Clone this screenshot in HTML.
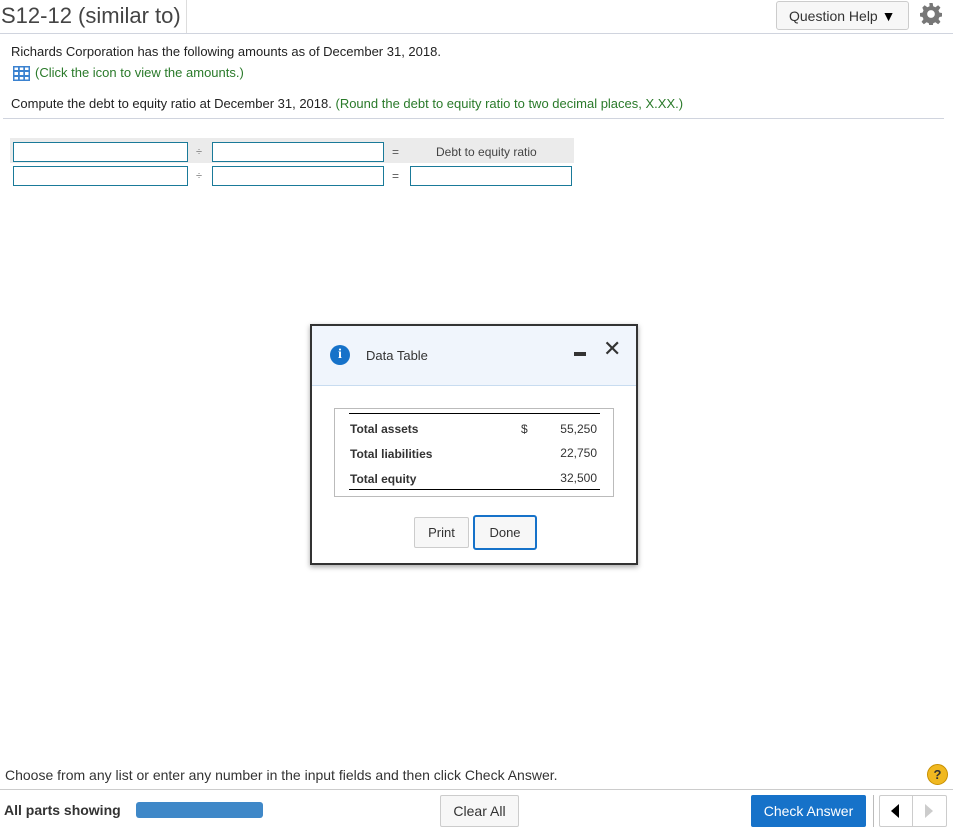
<!DOCTYPE html>
<html><head><meta charset="utf-8"><style>
*{box-sizing:border-box}
body{margin:0;width:953px;height:831px;position:relative;background:#fff;font-family:"Liberation Sans",Arial,sans-serif;color:#222;overflow:hidden}
.a{position:absolute}
input{position:absolute;height:20px;border:1px solid #1a7a99;background:#fff;margin:0;padding:0}
.g{color:#2a7a2a}
</style></head><body>
<div class="a" style="left:1px;top:3px;font-size:22px;color:#444">S12-12 (similar to)</div>
<div class="a" style="left:186px;top:0;width:1px;height:33px;background:#ddd"></div>
<div class="a" style="left:0;top:33px;width:953px;height:1px;background:#d0d4de"></div>
<div class="a" style="left:776px;top:1px;width:133px;height:29px;border:1px solid #ccc;border-radius:3px;background:#f7f7f7;font-size:14px;color:#333;padding:6px 0 0 12px">Question Help <span style="font-size:14px;color:#000">&#9660;</span></div>
<svg class="a" style="left:920px;top:3px" width="22" height="22" viewBox="0 0 20 20"><path fill="#777" fill-rule="evenodd" d="M8.5 0h3l.5 3 2 .9 2.5-1.8 2.1 2.1-1.8 2.5.9 2 3 .5v3l-3 .5-.9 2 1.8 2.5-2.1 2.1-2.5-1.8-2 .9-.5 3h-3l-.5-3-2-.9-2.5 1.8-2.1-2.1 1.8-2.5-.9-2-3-.5v-3l3-.5.9-2L2.1 4.2l2.1-2.1 2.5 1.8 2-.9zM10 6.5a3.5 3.5 0 1 0 0 7 3.5 3.5 0 0 0 0-7z"/></svg>
<div class="a" style="left:11px;top:44px;font-size:13px">Richards Corporation has the following amounts as of December 31, 2018.</div>
<svg class="a" style="left:13px;top:66px" width="17" height="15"><rect width="17" height="15" fill="#3b82d0"/><g fill="#fff"><rect x="1.5" y="1.5" width="3.5" height="2.5"/><rect x="6.8" y="1.5" width="3.5" height="2.5"/><rect x="12" y="1.5" width="3.5" height="2.5"/><rect x="1.5" y="6" width="3.5" height="3"/><rect x="6.8" y="6" width="3.5" height="3"/><rect x="12" y="6" width="3.5" height="3"/><rect x="1.5" y="11" width="3.5" height="2.5"/><rect x="6.8" y="11" width="3.5" height="2.5"/><rect x="12" y="11" width="3.5" height="2.5"/></g></svg>
<div class="a g" style="left:35px;top:65px;font-size:13px">(Click the icon to view the amounts.)</div>
<div class="a" style="left:11px;top:96px;font-size:13px">Compute the debt to equity ratio at December 31, 2018. <span class="g">(Round the debt to equity ratio to two decimal places, X.XX.)</span></div>
<div class="a" style="left:3px;top:118px;width:941px;height:1px;background:#d0d4de"></div>
<div class="a" style="left:10px;top:138px;width:564px;height:25px;background:#ebebeb"></div>
<input style="left:13px;top:142px;width:175px">
<div class="a" style="left:196px;top:146px;font-size:11px;color:#777">÷</div>
<input style="left:212px;top:142px;width:172px">
<div class="a" style="left:392px;top:145px;font-size:12px;color:#555">=</div>
<div class="a" style="left:436px;top:145px;font-size:12px;color:#444">Debt to equity ratio</div>
<input style="left:13px;top:166px;width:175px">
<div class="a" style="left:196px;top:170px;font-size:11px;color:#777">÷</div>
<input style="left:212px;top:166px;width:172px">
<div class="a" style="left:392px;top:169px;font-size:12px;color:#555">=</div>
<input style="left:410px;top:166px;width:162px">

<div class="a" style="left:310px;top:324px;width:328px;height:241px;border:2px solid #333;background:#fff;box-shadow:0 2px 5px rgba(0,0,0,.35)">
 <div class="a" style="left:0;top:0;width:324px;height:60px;background:#f0f5fc;border-bottom:1px solid #c8dcf0"></div>
 <div class="a" style="left:18px;top:19px;width:20px;height:20px;border-radius:50%;background:#1672c9;color:#fff;font:bold 14px 'Liberation Serif',serif;text-align:center;line-height:20px">i</div>
 <div class="a" style="left:54px;top:22px;font-size:13px;color:#333">Data Table</div>
 <div class="a" style="left:262px;top:26px;width:12px;height:4px;background:#333"></div>
 <div class="a" style="left:291px;top:10px;font-size:22px;color:#333">✕</div>
 <div class="a" style="left:22px;top:82px;width:280px;height:89px;border:1px solid #bbb"></div>
 <div class="a" style="left:37px;top:87px;width:251px;height:1px;background:#000"></div>
 <div class="a" style="left:37px;top:163px;width:251px;height:1px;background:#000"></div>
 <div class="a" style="left:38px;top:96px;font-size:12px;font-weight:bold;color:#333">Total assets</div>
 <div class="a" style="left:38px;top:121px;font-size:12px;font-weight:bold;color:#333">Total liabilities</div>
 <div class="a" style="left:38px;top:146px;font-size:12px;font-weight:bold;color:#333">Total equity</div>
 <div class="a" style="left:209px;top:96px;font-size:12px;color:#333">$</div>
 <div class="a" style="left:230px;top:96px;width:55px;text-align:right;font-size:12px;color:#333">55,250</div>
 <div class="a" style="left:230px;top:120px;width:55px;text-align:right;font-size:12px;color:#333">22,750</div>
 <div class="a" style="left:230px;top:145px;width:55px;text-align:right;font-size:12px;color:#333">32,500</div>
 <div class="a" style="left:102px;top:191px;width:55px;height:31px;border:1px solid #ccc;border-radius:2px;background:#f7f7f7;font-size:13px;color:#333;text-align:center;line-height:29px">Print</div>
 <div class="a" style="left:161px;top:189px;width:64px;height:35px;border:2px solid #1672c9;border-radius:3px;background:#f7f7f7;font-size:13px;color:#333;text-align:center;line-height:31px">Done</div>
</div>

<div class="a" style="left:5px;top:767px;font-size:14px;color:#333">Choose from any list or enter any number in the input fields and then click Check Answer.</div>
<div class="a" style="left:927px;top:764px;width:21px;height:21px;border-radius:50%;background:#f0b820;border:1px solid #c89000;font:bold 13px 'Liberation Sans';text-align:center;line-height:19px;color:#333">?</div>
<div class="a" style="left:0;top:789px;width:953px;height:1px;background:#ccc"></div>
<div class="a" style="left:4px;top:802px;font-size:14px;font-weight:bold;color:#333">All parts showing</div>
<div class="a" style="left:136px;top:802px;width:127px;height:16px;border-radius:3px;background:#3f88c8"></div>
<div class="a" style="left:440px;top:795px;width:79px;height:32px;border:1px solid #ccc;border-radius:2px;background:#f7f7f7;font-size:14px;color:#333;text-align:center;line-height:30px">Clear All</div>
<div class="a" style="left:751px;top:795px;width:115px;height:32px;border-radius:2px;background:#1672c9;font-size:14px;color:#fff;text-align:center;line-height:32px">Check Answer</div>
<div class="a" style="left:873px;top:795px;width:1px;height:32px;background:#bbb"></div>
<div class="a" style="left:879px;top:795px;width:68px;height:32px;border:1px solid #ccc;border-radius:2px;background:#fff"></div>
<div class="a" style="left:912px;top:795px;width:1px;height:32px;background:#ccc"></div>
<div class="a" style="left:891px;top:804px;width:0;height:0;border-top:7px solid transparent;border-bottom:7px solid transparent;border-right:8px solid #000"></div>
<div class="a" style="left:925px;top:804px;width:0;height:0;border-top:7px solid transparent;border-bottom:7px solid transparent;border-left:8px solid #ccc"></div>
</body></html>
